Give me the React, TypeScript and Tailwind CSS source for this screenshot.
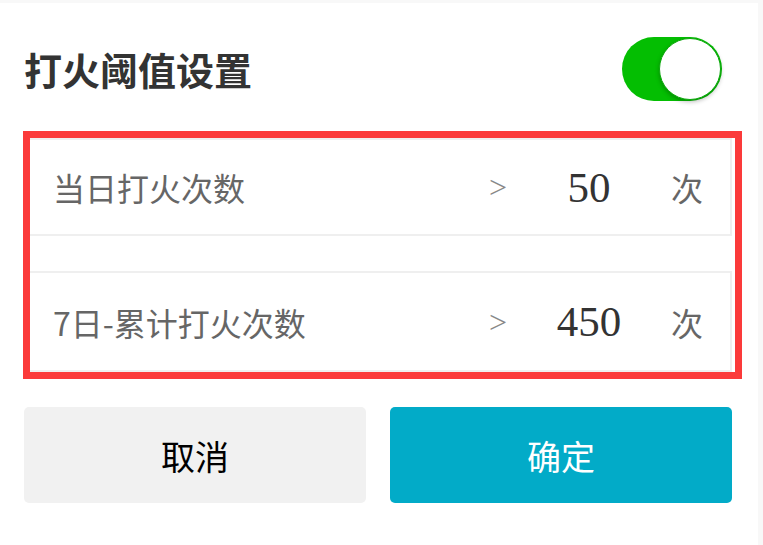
import React, { useState } from "react";

type Rule = { label: string; value: number; unit: string };

function ThresholdRow({ rule, className }: { rule: Rule; className: string }) {
  return (
    <div
      className={`flex items-center bg-white border-2 border-l-0 border-[#efefef] mr-[3px] ${className}`}
    >
      <div className="flex-1 pl-[23px] text-[32px] leading-none text-[#666666] [font-family:Noto_Sans_CJK_SC,sans-serif]">
        {rule.label}
      </div>
      <span className="text-[32px] leading-none text-[#888888] [font-family:Liberation_Serif,serif]">
        &gt;
      </span>
      <span className="w-[120px] ml-[22px] text-center text-[43px] leading-none text-[#333333] [font-family:Liberation_Serif,serif]">
        {rule.value}
      </span>
      <span className="ml-[22px] mr-[27px] text-[32px] leading-none text-[#666666] [font-family:Noto_Sans_CJK_SC,sans-serif]">
        {rule.unit}
      </span>
    </div>
  );
}

export default function App() {
  const [enabled, setEnabled] = useState(true);

  const rules: Rule[] = [
    { label: "当日打火次数", value: 50, unit: "次" },
    { label: "7日-累计打火次数", value: 450, unit: "次" },
  ];

  return (
    <div className="w-[763px] h-[545px] bg-[#f8f8f8] overflow-hidden">
      <div className="mt-[3px] w-[758px] h-[542px] bg-white">
        {/* 标题 + 开关 */}
        <div className="flex items-center justify-between pl-[24px] pr-[36px] pt-[34px] pb-[30px]">
          <h1 className="text-[38px] font-bold leading-none text-[#333333] [font-family:Noto_Sans_CJK_SC,sans-serif]">
            打火阈值设置
          </h1>
          <button
            onClick={() => setEnabled(!enabled)}
            className={`flex w-[100px] h-[64px] rounded-full p-[1px] ${
              enabled ? "justify-end bg-[#04be02]" : "justify-start bg-[#dddddd]"
            }`}
          >
            <span className="block w-[62px] h-[62px] rounded-full bg-white border border-[#0aa80a] shadow-[0_2px_4px_rgba(0,0,0,0.25)]" />
          </button>
        </div>

        {/* 阈值列表 */}
        <div className="ml-[23px] mr-[16px] border-[7px] border-[#fb3a3a]">
          <ThresholdRow rule={rules[0]} className="h-[98px]" />
          <ThresholdRow rule={rules[1]} className="h-[101px] mt-[35px]" />
        </div>

        {/* 按钮 */}
        <div className="flex gap-[24px] mt-[28px] ml-[24px] mr-[26px] h-[96px]">
          <button className="flex-1 rounded-[5px] bg-[#f1f1f1] text-[34px] text-black [font-family:Noto_Sans_CJK_SC,sans-serif]">
            取消
          </button>
          <button className="flex-1 rounded-[5px] bg-[#02abc8] text-[34px] text-white [font-family:Noto_Sans_CJK_SC,sans-serif]">
            确定
          </button>
        </div>
      </div>
    </div>
  );
}
